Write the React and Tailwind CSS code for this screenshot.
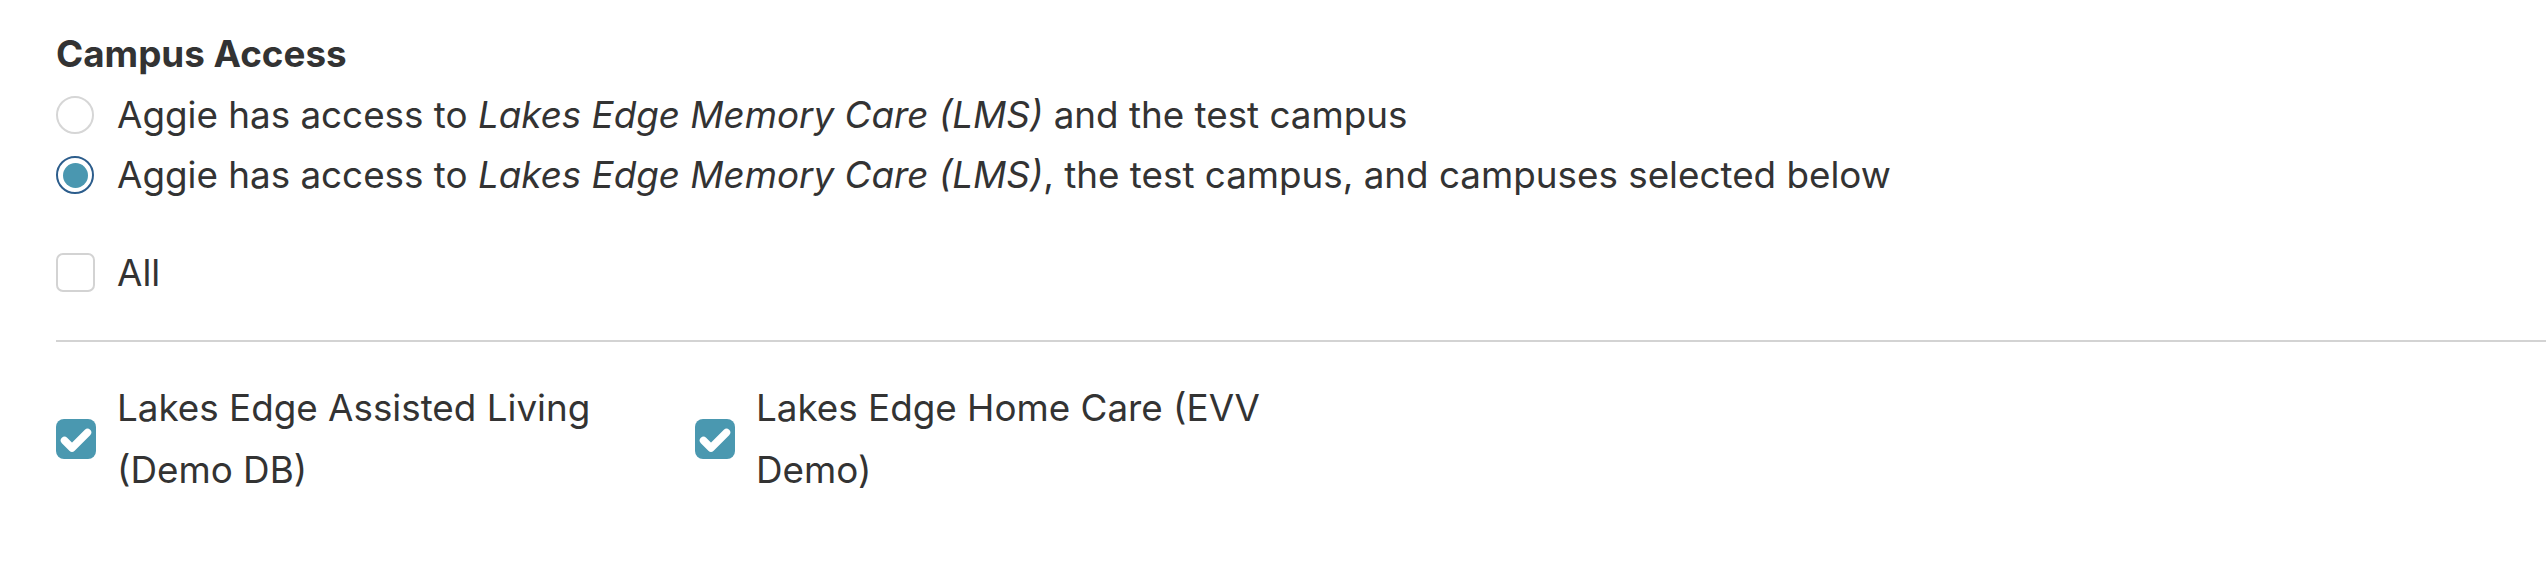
import React from 'react'

const Radio = ({ checked }) => (
  <span
    className={
      checked
        ? 'mt-[11px] flex h-[38px] w-[38px] shrink-0 items-center justify-center rounded-full border-2 border-[#2c5d8c] bg-white'
        : 'mt-[11px] flex h-[38px] w-[38px] shrink-0 rounded-full border-2 border-[#d6d6d6] bg-white'
    }
  >
    {checked && <span className="h-[25px] w-[25px] rounded-full bg-[#4a97b0]"></span>}
  </span>
)

const CheckedBox = () => (
  <span className="flex h-[40px] w-[40px] shrink-0 items-center justify-center rounded-[8px] bg-[#4a98b0]">
    <svg width="40" height="40" viewBox="0 0 40 40">
      <polyline
        points="8.5,21.5 16,29 31.5,13.5"
        fill="none"
        stroke="#ffffff"
        strokeWidth="7.5"
        strokeLinecap="round"
        strokeLinejoin="round"
      />
    </svg>
  </span>
)

const campuses = ['Lakes Edge Assisted Living (Demo DB)', 'Lakes Edge Home Care (EVV Demo)']

const App = () => {
  return (
    <div className="min-h-screen bg-white pt-[32px] pl-[56px] text-[#333333] font-['Inter','Noto_Sans',sans-serif]">
      {/* Heading */}
      <h2 className="text-[36.8px] leading-[44px] font-bold">Campus Access</h2>

      {/* Access options */}
      <div className="mt-[9px] flex flex-col text-[36.8px] leading-[60px]">
        <label className="flex items-start gap-[23px]">
          <Radio checked={false} />
          <span>
            Aggie has access to <i>Lakes Edge Memory Care (LMS)</i> and the test campus
          </span>
        </label>
        <label className="flex items-start gap-[23px]">
          <Radio checked />
          <span>
            Aggie has access to <i>Lakes Edge Memory Care (LMS)</i>, the test campus, and campuses selected below
          </span>
        </label>
      </div>

      {/* All */}
      <label className="mt-[38px] flex items-start gap-[23px] text-[36.8px] leading-[60px]">
        <span className="mt-[10px] h-[39px] w-[39px] shrink-0 rounded-[7px] border-2 border-[#d3d3d3] bg-white"></span>
        <span className="-ml-px">All</span>
      </label>

      <div className="mt-[37px] h-[2px] bg-[#d3d3d3]"></div>

      {/* Campus list */}
      <div className="mt-[35px] flex gap-[38px] text-[36.8px] leading-[61.6px]">
        {campuses.map((c) => (
          <label key={c} className="flex items-center gap-[21px]">
            <CheckedBox />
            <span className="w-[540px]">{c}</span>
          </label>
        ))}
      </div>
    </div>
  )
}

export default App
